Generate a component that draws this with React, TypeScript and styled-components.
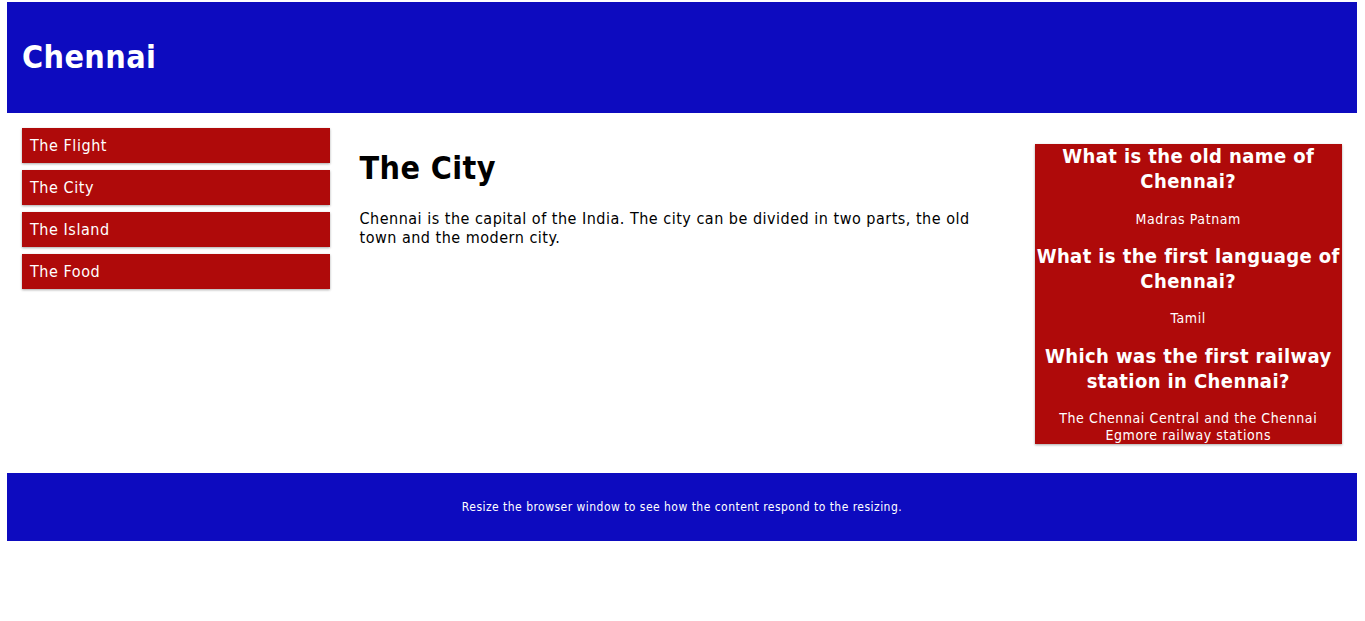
import React from "react";
import styled, { createGlobalStyle } from "styled-components";

const Global = createGlobalStyle`
  * { box-sizing: border-box; }
  html { font-family: "DejaVu Sans Condensed", "DejaVu Sans", sans-serif; letter-spacing: 0.4px; }
  body { margin: 2px 8px 8px 7px; background: #ffffff; }
`;

const Header = styled.header`
  background-color: #0d0bbf;
  color: #ffffff;
  padding: 15px;
`;

const Title = styled.h1`
  font-size: 32px;
  font-weight: bold;
  margin: 21.44px 0;
`;

const Row = styled.div`
  display: flex;
  align-items: flex-start;
`;

const Col = styled.div<{ $w: number }>`
  width: ${(p) => p.$w}%;
  padding: 15px;
`;

const Menu = styled.ul`
  list-style: none;
  margin: 0;
  padding: 0;
`;

const MenuItem = styled.li`
  padding: 8px;
  margin-bottom: 7px;
  background-color: #af0a0a;
  color: #ffffff;
  font-size: 16px;
  letter-spacing: 0.55px;
  box-shadow: 0 1px 3px rgba(0, 0, 0, 0.12), 0 1px 2px rgba(0, 0, 0, 0.24);
`;

const Heading = styled.h1`
  font-size: 32px;
  font-weight: bold;
  margin: 21.44px 0;
`;

const Para = styled.p`
  font-size: 16px;
  letter-spacing: 0.5px;
  margin: 16px 0;
`;

const Aside = styled.div`
  background-color: #af0a0a;
  color: #ffffff;
  text-align: center;
  font-size: 14px;
  margin: 16.6px 0 14px;
  box-shadow: 0 1px 3px rgba(0, 0, 0, 0.12), 0 1px 2px rgba(0, 0, 0, 0.24);
`;

const Question = styled.h2`
  font-size: 20px;
  font-weight: bold;
  line-height: 24.75px;
  letter-spacing: 0.4px;
  margin: 16.6px 0;
  &:first-child { margin-top: 0; }
`;

const Answer = styled.p`
  line-height: 17px;
  letter-spacing: 0.6px;
  margin: 14px 0;
  &:last-child { margin-bottom: 0; }
`;

const Footer = styled.footer`
  background-color: #0d0bbf;
  color: #ffffff;
  text-align: center;
  font-size: 12px;
  letter-spacing: 0.47px;
  padding: 15px;
`;

const FooterText = styled.p`
  margin: 12px 0;
`;

const qa = [
  ["What is the old name of Chennai?", "Madras Patnam"],
  ["What is the first language of Chennai?", "Tamil"],
  [
    "Which was the first railway station in Chennai?",
    "The Chennai Central and the Chennai Egmore railway stations",
  ],
];

export default function App() {
  return (
    <>
      <Global />
      <Header>
        <Title>Chennai</Title>
      </Header>
      <Row>
        <Col $w={25}>
          <Menu>
            <MenuItem>The Flight</MenuItem>
            <MenuItem>The City</MenuItem>
            <MenuItem>The Island</MenuItem>
            <MenuItem>The Food</MenuItem>
          </Menu>
        </Col>
        <Col $w={50}>
          <Heading>The City</Heading>
          <Para>
            Chennai is the capital of the India. The city can be divided in two
            parts, the old town and the modern city.
          </Para>
        </Col>
        <Col $w={25}>
          <Aside>
            {qa.map(([q, a]) => (
              <React.Fragment key={q}>
                <Question>{q}</Question>
                <Answer>{a}</Answer>
              </React.Fragment>
            ))}
          </Aside>
        </Col>
      </Row>
      <Footer>
        <FooterText>
          Resize the browser window to see how the content respond to the
          resizing.
        </FooterText>
      </Footer>
    </>
  );
}
